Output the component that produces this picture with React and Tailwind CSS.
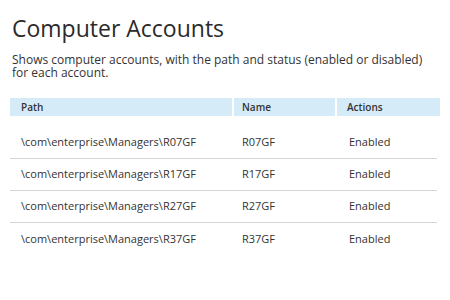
import React from 'react';

const rows = [
  { path: '\\com\\enterprise\\Managers\\R07GF', name: 'R07GF', action: 'Enabled' },
  { path: '\\com\\enterprise\\Managers\\R17GF', name: 'R17GF', action: 'Enabled' },
  { path: '\\com\\enterprise\\Managers\\R27GF', name: 'R27GF', action: 'Enabled' },
  { path: '\\com\\enterprise\\Managers\\R37GF', name: 'R37GF', action: 'Enabled' },
];

function App() {
  return (
    <div className="w-[450px] h-[300px] bg-white text-[#333] font-['Open_Sans',sans-serif] overflow-hidden">
      {/* Title */}
      <div className="pl-[12px] pt-[12px]">
        <h1 className="text-[23px] leading-[32px] text-[#2b2b2b]">Computer Accounts</h1>
        <p className="mt-[9px] text-[12px] leading-[13px] pr-[20px]">
          Shows computer accounts, with the path and status (enabled or disabled) for each account.
        </p>
      </div>

      {/* Table */}
      <div className="ml-[10px] mt-[19px] w-[430px]">
        <div className="flex h-[18px] gap-[2px] text-[10px] font-semibold text-[#333]">
          <div className="w-[222px] bg-[#d6ebf8] pl-[11px] flex items-center">Path</div>
          <div className="w-[101px] bg-[#d6ebf8] pl-[8px] flex items-center">Name</div>
          <div className="flex-1 bg-[#d6ebf8] pl-[10px] flex items-center">Actions</div>
        </div>
        <div className="mt-[11px] w-[427px]">
          {rows.map((r, i) => (
            <div
              key={r.name}
              className={`flex h-[32px] items-center text-[11px] ${
                i < rows.length - 1 ? 'border-b border-[#d4d4d4]' : ''
              }`}
            >
              <div className="w-[224px] pl-[11px]">{r.path}</div>
              <div className="w-[103px] pl-[8px]">{r.name}</div>
              <div className="flex-1 pl-[12px]">{r.action}</div>
            </div>
          ))}
        </div>
      </div>
    </div>
  );
}

export default App;
